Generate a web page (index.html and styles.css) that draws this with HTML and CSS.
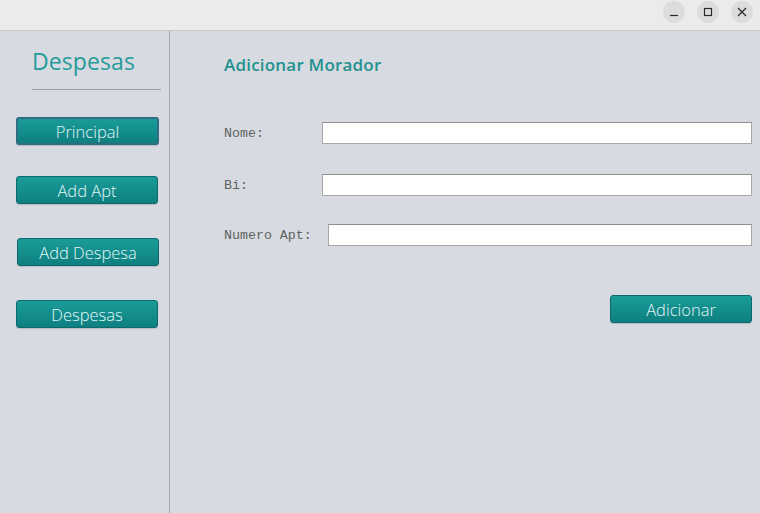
FILE: index.html
```html
<!DOCTYPE html>
<html lang="pt">
<head>
<meta charset="utf-8">
<title>Despesas</title>
<link rel="stylesheet" href="styles.css">
</head>
<body>
<div class="window">
  <header class="titlebar">
    <span class="wbtn"><svg width="10" height="10" viewBox="0 0 10 10"><path d="M1 8.5h8" stroke="#2b2b2b" stroke-width="1.2"/></svg></span>
    <span class="wbtn"><svg width="10" height="10" viewBox="0 0 10 10"><rect x="1.5" y="1.5" width="7" height="7" fill="none" stroke="#2b2b2b" stroke-width="1.2"/></svg></span>
    <span class="wbtn"><svg width="10" height="10" viewBox="0 0 10 10"><path d="M1 1l8 8M9 1l-8 8" stroke="#2b2b2b" stroke-width="1.3"/></svg></span>
  </header>
  <div class="main">
    <aside class="sidebar">
      <h1 class="side-title">Despesas</h1>
      <hr class="side-rule">
      <nav class="nav">
        <button class="btn nav-btn focused">Principal</button>
        <button class="btn nav-btn">Add Apt</button>
        <button class="btn nav-btn wide">Add Despesa</button>
        <button class="btn nav-btn">Despesas</button>
      </nav>
    </aside>
    <section class="content">
      <h2 class="page-title">Adicionar Morador</h2>
      <form class="form">
        <div class="row r1"><label class="lbl">Nome:</label><input class="field" type="text"></div>
        <div class="row r2"><label class="lbl">Bi:</label><input class="field" type="text"></div>
        <div class="row r3"><label class="lbl">Numero Apt:</label><input class="field" type="text"></div>
        <div class="actions"><button type="button" class="btn submit">Adicionar</button></div>
      </form>
    </section>
  </div>
</div>
</body>
</html>
```
FILE: styles.css
```css
* { box-sizing: border-box; }
html, body { margin: 0; padding: 0; }
body { width: 760px; height: 513px; overflow: hidden; background: #d7dae1; font-family: "Open Sans", sans-serif; }
.window { display: flex; flex-direction: column; height: 513px; }
.titlebar {
  height: 31px; background: #ebebeb; border-bottom: 1px solid #c9c9cb;
  display: flex; justify-content: flex-end; align-items: flex-start;
  padding: 1px 7px 0 0; gap: 12px;
}
.wbtn { width: 22px; height: 22px; border-radius: 50%; background: #dcdcdc; display: flex; align-items: center; justify-content: center; }
.main { flex: 1; display: flex; }
.sidebar { width: 170px; border-right: 1px solid #a3a7ae; padding: 14px 0 0 16px; display: flex; flex-direction: column; }
.side-title { margin: 0 0 0 16px; font-size: 23px; font-weight: 400; color: #259c9a; line-height: 32px; letter-spacing: 0.1px; }
.side-rule { margin: 12px 0 0 16px; width: 129px; border: 0; border-top: 1px solid #9ea2a8; height: 0; }
.nav { display: flex; flex-direction: column; margin-top: 27px; }
.btn {
  font-family: "Open Sans", sans-serif; font-weight: 300; font-size: 16.5px; color: #e4f7f6;
  background: linear-gradient(#1a9c99, #128b8a 60%, #0f7f80);
  border: 1px solid #0c6a6c; border-radius: 3px; padding: 0; line-height: 25px;
  box-shadow: 0 1px 1px rgba(0,0,0,0.15);
}
.nav-btn { width: 142px; height: 28px; margin-bottom: 31px; }
.nav-btn:nth-child(2) { margin-bottom: 34px; }
.nav-btn:nth-child(3) { margin-bottom: 34px; }
.nav-btn.wide { margin-left: 1px; width: 142px; }
.nav-btn.focused { width: 143px; border: 2px solid #2f6e82; line-height: 23px; }
.content { flex: 1; padding: 22px 8px 0 54px; }
.page-title { margin: 0; font-size: 17px; font-weight: 600; color: #23928f; line-height: 24px; letter-spacing: 0.2px; }
.form { margin-top: 45px; display: flex; flex-direction: column; }
.row { display: flex; align-items: center; height: 22px; }
.r2 { margin-top: 30px; }
.r3 { margin-top: 28px; }
.lbl { font-family: "Liberation Mono", monospace; font-size: 13.3px; color: #626262; min-width: 82px; margin-right: 16px; }
.field { flex: 1; height: 22px; background: #fff; border: 1px solid #a7a7a7; border-top-color: #8e8e8e; margin: 0; padding: 0; }
.actions { display: flex; justify-content: flex-end; margin-top: 49px; }
.submit { width: 142px; height: 28px; }
```
